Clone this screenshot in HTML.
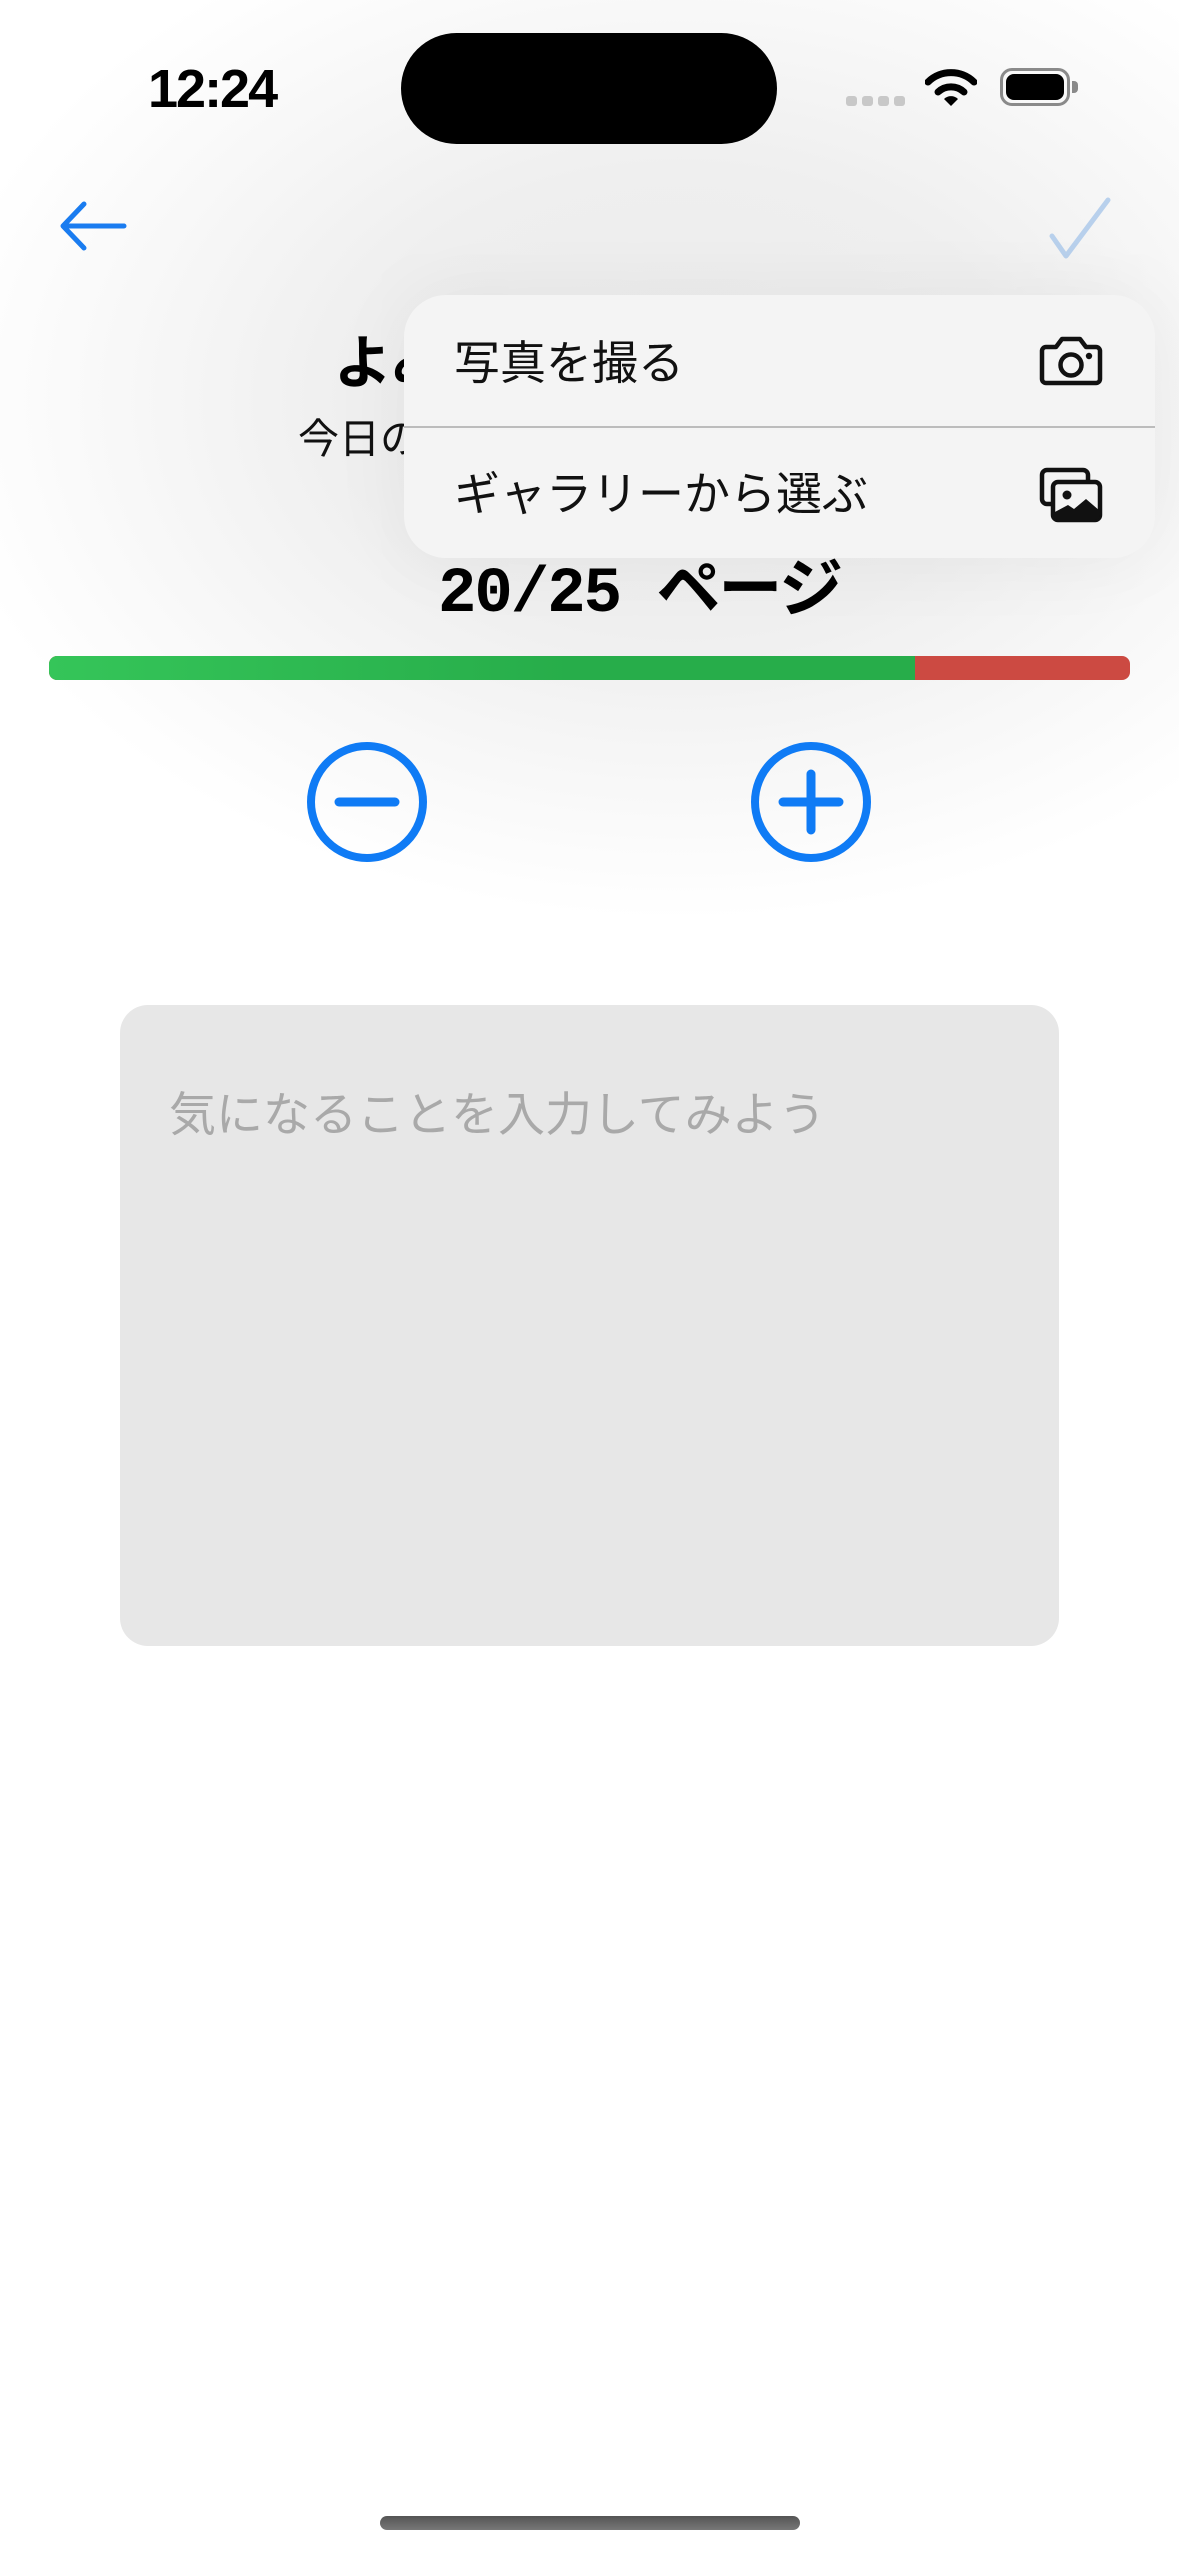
<!DOCTYPE html>
<html><head><meta charset="utf-8"><style>
*{margin:0;padding:0;box-sizing:border-box}
body{width:1179px;height:2556px;overflow:hidden;position:relative;background:#fff;font-family:"Liberation Sans","Noto Sans CJK JP",sans-serif}
.bg{position:absolute;left:0;top:0;width:1179px;height:1000px;background:radial-gradient(ellipse 750px 520px at 680px 400px,#ececec 0%,#efefef 45%,#f8f8f8 75%,#fff 100%)}
.abs{position:absolute}
.time{left:148px;top:58px;font-size:54px;font-weight:bold;letter-spacing:-2px;color:#000}
.island{left:401px;top:33px;width:376px;height:111px;border-radius:56px;background:#000}
.dot{top:96px;width:11px;height:10px;border-radius:3px;background:#c8c8c8}
.menu{left:404px;top:295px;width:751px;height:263px;border-radius:42px;background:#f4f4f4;box-shadow:0 0 80px rgba(0,0,0,0.06)}
.mtext{left:50px;font-size:46px;color:#111}
.div{left:0;top:131px;width:751px;height:2px;background:#bcbcbc}
</style></head><body>
<div class="bg"></div>
<div class="abs time">12:24</div>
<div class="abs island"></div>
<div class="abs dot" style="left:846px"></div>
<div class="abs dot" style="left:862px"></div>
<div class="abs dot" style="left:878px"></div>
<div class="abs dot" style="left:894px"></div>
<svg class="abs" style="left:925px;top:66px" width="52" height="42" viewBox="0 0 52 42">
<path d="M3 16 A33 33 0 0 1 49 16" fill="none" stroke="#000" stroke-width="7" stroke-linecap="round"/>
<path d="M13 26 A19 19 0 0 1 39 26" fill="none" stroke="#000" stroke-width="7" stroke-linecap="round"/>
<path d="M19 33 L26 40 L33 33 A10 10 0 0 0 19 33Z" fill="#000"/>
</svg>
<div class="abs" style="left:1000px;top:68px;width:70px;height:38px;border:3px solid #8a8a8a;border-radius:12px;padding:3px"><div style="width:100%;height:100%;background:#000;border-radius:8px"></div></div>
<div class="abs" style="left:1072px;top:81px;width:6px;height:12px;background:#8a8a8a;border-radius:0 4px 4px 0"></div>

<svg class="abs" style="left:58px;top:196px" width="72" height="60" viewBox="0 0 72 60">
<path d="M66 30 H6 M26 8 L5 30 L26 52" fill="none" stroke="#1a7cf0" stroke-width="5" stroke-linecap="round" stroke-linejoin="round"/>
</svg>
<svg class="abs" style="left:1048px;top:196px" width="66" height="66" viewBox="0 0 66 66">
<path d="M4 40 L18 60 L60 4" fill="none" stroke="#b8d0ec" stroke-width="5" stroke-linecap="round" stroke-linejoin="round"/>
</svg>

<div class="abs" style="left:334px;top:316px;font-size:58px;font-weight:bold;color:#000">よみすすめよう</div>
<div class="abs" style="left:298px;top:405px;font-size:41px;color:#111">今日の目標ページ</div>
<div class="abs" style="left:438px;top:538px;font-size:64px;font-weight:bold;font-family:'Liberation Mono','Noto Sans CJK JP',monospace;color:#000;white-space:nowrap;letter-spacing:-2px">20/25 ページ</div>

<div class="abs" style="left:49px;top:656px;width:1081px;height:24px;border-radius:8px;background:#cc4a42;overflow:hidden"><div style="width:866px;height:100%;background:linear-gradient(90deg,#35c559,#27ad4a 60%,#27ad4a)"></div></div>

<svg class="abs" style="left:305px;top:740px" width="124" height="124" viewBox="0 0 124 124">
<circle cx="62" cy="62" r="56" fill="none" stroke="#0f7bf5" stroke-width="8"/>
<path d="M34 62 H90" stroke="#0f7bf5" stroke-width="9" stroke-linecap="round"/>
</svg>
<svg class="abs" style="left:749px;top:740px" width="124" height="124" viewBox="0 0 124 124">
<circle cx="62" cy="62" r="56" fill="none" stroke="#0f7bf5" stroke-width="8"/>
<path d="M34 62 H90 M62 34 V90" stroke="#0f7bf5" stroke-width="9" stroke-linecap="round"/>
</svg>

<div class="abs menu">
<div class="abs mtext" style="top:32px">写真を撮る</div>
<div class="abs div"></div>
<div class="abs mtext" style="top:163px">ギャラリーから選ぶ</div>
<svg class="abs" style="left:634px;top:40px" width="66" height="52" viewBox="0 0 66 52">
<path d="M8 12 H18 L24 4 H42 L48 12 H58 A4 4 0 0 1 62 16 V44 A4 4 0 0 1 58 48 H8 A4 4 0 0 1 4 44 V16 A4 4 0 0 1 8 12Z" fill="none" stroke="#111" stroke-width="4.5" stroke-linejoin="round"/>
<circle cx="33" cy="30" r="10.5" fill="none" stroke="#111" stroke-width="4.5"/>
<circle cx="51" cy="21" r="3.2" fill="#111"/>
</svg>
<svg class="abs" style="left:634px;top:172px" width="66" height="56" viewBox="0 0 66 56">
<rect x="4" y="3" width="46" height="34" rx="5" fill="none" stroke="#111" stroke-width="4.5"/>
<rect x="15" y="15" width="47" height="38" rx="5" fill="#f4f4f4" stroke="#111" stroke-width="4.5"/>
<circle cx="29" cy="28" r="4.5" fill="#111"/>
<path d="M15 46 L30 38 L36 42 L48 32 L62 44 V48 A5 5 0 0 1 57 53 H20 A5 5 0 0 1 15 48Z" fill="#111"/>
</svg>
</div>

<div class="abs" style="left:120px;top:1005px;width:939px;height:641px;border-radius:28px;background:#e7e7e7"></div>
<div class="abs" style="left:169px;top:1076px;font-size:47px;color:#a9a9a9;white-space:nowrap">気になることを入力してみよう</div>

<div class="abs" style="left:380px;top:2516px;width:420px;height:14px;border-radius:7px;background:linear-gradient(#555,#777)"></div>
</body></html>
